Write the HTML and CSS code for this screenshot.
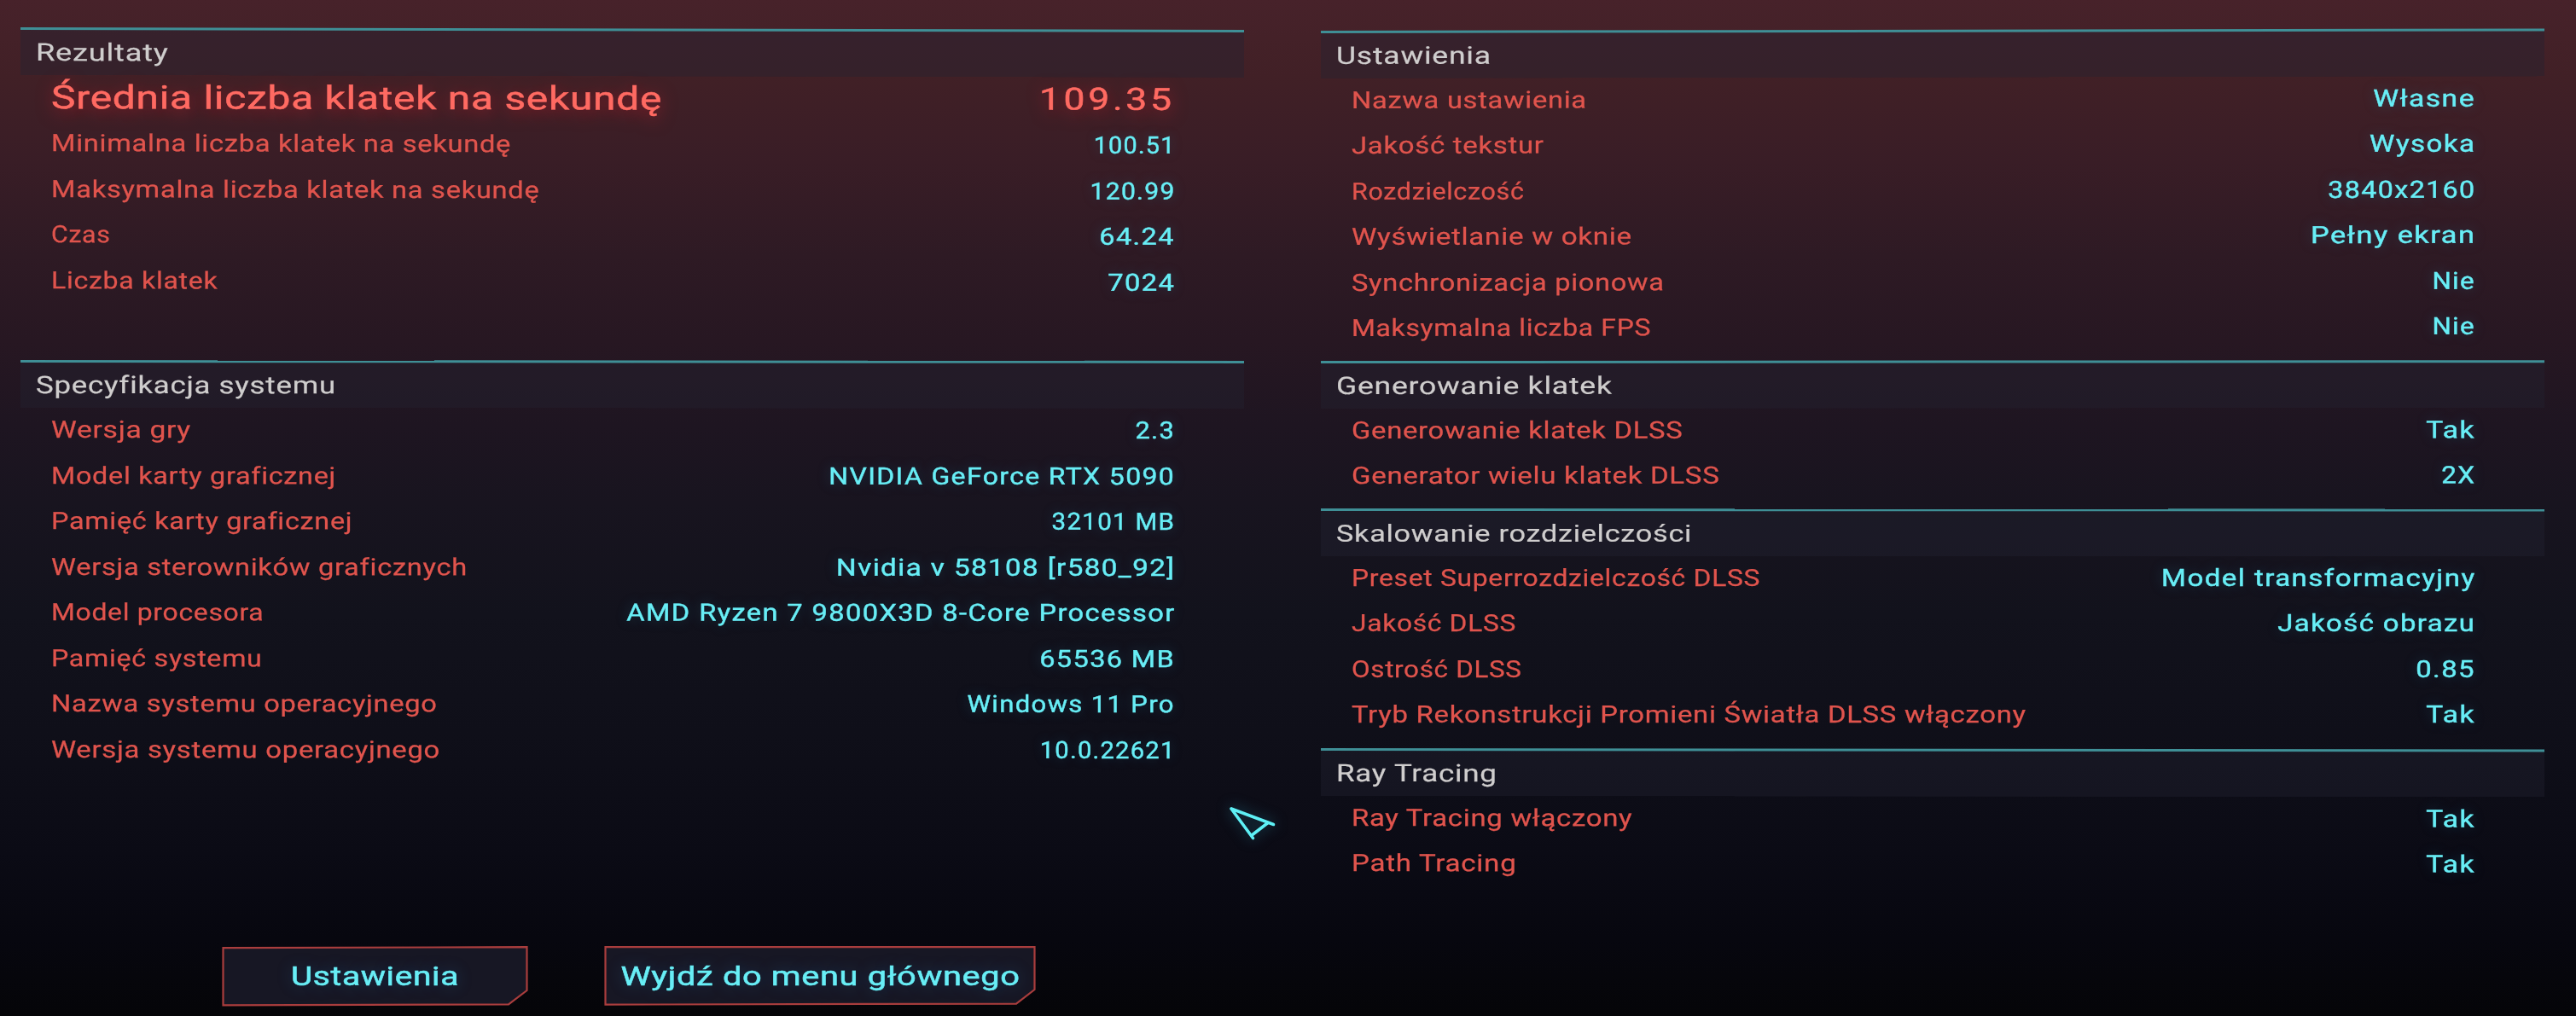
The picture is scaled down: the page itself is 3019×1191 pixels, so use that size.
FILE: index.html
```html
<!DOCTYPE html>
<html lang="pl">
<head>
    <meta charset="UTF-8">
    <meta name="viewport" content="width=device-width, initial-scale=1.0">
    <title>Rezultaty</title>
    <link rel="stylesheet" href="styles.css">
</head>
<body>
    <div class="columns">
        <div class="column column-left">
            <section class="section results">
                <h2><span data-width="153">Rezultaty</span></h2>
                <div class="row row-main"><span class="label" data-width="713">Średnia liczba klatek na sekundę</span><span class="value" data-width="153">109.35</span></div>
                <div class="row"><span class="label" data-width="536">Minimalna liczba klatek na sekundę</span><span class="value" data-width="93">100.51</span></div>
                <div class="row"><span class="label" data-width="570">Maksymalna liczba klatek na sekundę</span><span class="value" data-width="97">120.99</span></div>
                <div class="row"><span class="label" data-width="67">Czas</span><span class="value" data-width="85">64.24</span></div>
                <div class="row"><span class="label" data-width="192">Liczba klatek</span><span class="value" data-width="75">7024</span></div>
            </section>

            <section class="section system">
                <h2><span data-width="349">Specyfikacja systemu</span></h2>
                <div class="row"><span class="label" data-width="161">Wersja gry</span><span class="value" data-width="43">2.3</span></div>
                <div class="row"><span class="label" data-width="331">Model karty graficznej</span><span class="value" data-width="402">NVIDIA GeForce RTX 5090</span></div>
                <div class="row"><span class="label" data-width="350">Pamięć karty graficznej</span><span class="value" data-width="141">32101 MB</span></div>
                <div class="row"><span class="label" data-width="485">Wersja sterowników graficznych</span><span class="value" data-width="393">Nvidia v 58108 [r580_92]</span></div>
                <div class="row"><span class="label" data-width="246">Model procesora</span><span class="value" data-width="640">AMD Ryzen 7 9800X3D 8-Core Processor</span></div>
                <div class="row"><span class="label" data-width="245">Pamięć systemu</span><span class="value" data-width="155">65536 MB</span></div>
                <div class="row"><span class="label" data-width="450">Nazwa systemu operacyjnego</span><span class="value" data-width="240">Windows 11 Pro</span></div>
                <div class="row"><span class="label" data-width="453">Wersja systemu operacyjnego</span><span class="value" data-width="156">10.0.22621</span></div>
            </section>

            <div class="buttons">
                <button class="btn btn-settings">
                    <svg class="btn-frame" width="359" height="71" viewBox="0 0 359 71"><path d="M1.5 2.2 L357.5 1.2 V52 L336 68.4 L1.5 69.4 Z"/></svg>
                    <span data-width="194">Ustawienia</span>
                </button>
                <button class="btn btn-exit">
                    <svg class="btn-frame" width="506" height="71" viewBox="0 0 506 71"><path d="M1.5 1.2 H504.5 V51 L483 67.6 L1.5 68.6 Z"/></svg>
                    <span data-width="465">Wyjdź do menu głównego</span>
                </button>
            </div>
        </div>

        <div class="column column-right">
            <section class="section settings">
                <h2><span data-width="179">Ustawienia</span></h2>
                <div class="row"><span class="label" data-width="273">Nazwa ustawienia</span><span class="value" data-width="116">Własne</span></div>
                <div class="row"><span class="label" data-width="223">Jakość tekstur</span><span class="value" data-width="120">Wysoka</span></div>
                <div class="row"><span class="label" data-width="200">Rozdzielczość</span><span class="value" data-width="170">3840x2160</span></div>
                <div class="row"><span class="label" data-width="326">Wyświetlanie w oknie</span><span class="value" data-width="189">Pełny ekran</span></div>
                <div class="row"><span class="label" data-width="364">Synchronizacja pionowa</span><span class="value" data-width="47">Nie</span></div>
                <div class="row"><span class="label" data-width="348">Maksymalna liczba FPS</span><span class="value" data-width="47">Nie</span></div>
            </section>

            <section class="section frames">
                <h2><span data-width="320">Generowanie klatek</span></h2>
                <div class="row"><span class="label" data-width="385">Generowanie klatek DLSS</span><span class="value" data-width="54">Tak</span></div>
                <div class="row"><span class="label" data-width="428">Generator wielu klatek DLSS</span><span class="value" data-width="36">2X</span></div>
            </section>

            <section class="section scaling">
                <h2><span data-width="414">Skalowanie rozdzielczości</span></h2>
                <div class="row"><span class="label" data-width="476">Preset Superrozdzielczość DLSS</span><span class="value" data-width="364">Model transformacyjny</span></div>
                <div class="row"><span class="label" data-width="190">Jakość DLSS</span><span class="value" data-width="228">Jakość obrazu</span></div>
                <div class="row"><span class="label" data-width="197">Ostrość DLSS</span><span class="value" data-width="66">0.85</span></div>
                <div class="row"><span class="label" data-width="788">Tryb Rekonstrukcji Promieni Światła DLSS włączony</span><span class="value" data-width="54">Tak</span></div>
            </section>

            <section class="section raytracing">
                <h2><span data-width="186">Ray Tracing</span></h2>
                <div class="row"><span class="label" data-width="326">Ray Tracing włączony</span><span class="value" data-width="54">Tak</span></div>
                <div class="row"><span class="label" data-width="190">Path Tracing</span><span class="value" data-width="54">Tak</span></div>
            </section>
        </div>
    </div>

    <svg class="cursor" width="60" height="44" viewBox="0 0 60 44">
        <path d="M5 5 L54.5 23.5 M5 5 L30.5 39.5 M28.5 36.5 L48 21.5"/>
    </svg>

    <script>
        // Stretch each text to its wide HUD proportions
        document.querySelectorAll('[data-width]').forEach(el => {
            const spacing = parseFloat(getComputedStyle(el).letterSpacing) || 0;
            const natural = el.offsetWidth - spacing - 2;
            el.style.transform = `scaleX(${(el.dataset.width / natural).toFixed(4)})`;
        });
    </script>
</body>
</html>
```
FILE: styles.css
```css
* {
    box-sizing: border-box;
}
body {
    margin: 0;
    width: 3019px;
    height: 1191px;
    overflow: hidden;
    font-family: Roboto, sans-serif;
    background: linear-gradient(
        #47222a 0px,
        #412026 90px,
        #391d26 190px,
        #2e1a24 300px,
        #271722 400px,
        #1e1521 500px,
        #18141f 590px,
        #12121c 720px,
        #0f0f19 860px,
        #0b0b15 1000px,
        #07070f 1100px,
        #050508 1191px
    );
}
.columns {
    display: flex;
    gap: 90px;
    padding-left: 24px;
}
.column {
    display: flex;
    flex-direction: column;
    width: 1434px;
}
.column-left {
    padding-top: 32.2px;
    gap: 65.4px;
}
.column-right {
    padding-top: 35.7px;
    gap: 10.8px;
}

.section {
    transform-origin: 0 0;
}
.results {
    transform: skewY(0.12deg);
}
.system {
    transform: skewY(0.04deg);
}
.settings {
    transform: skewY(-0.1deg);
}
.frames {
    transform: skewY(-0.03deg);
}
.scaling {
    transform: skewY(0.02deg);
}
.raytracing {
    transform: skewY(0.06deg);
}

h2 {
    margin: 0;
    height: 56px;
    padding-left: 18px;
    border-top: 3px solid #3f8f96;
    background: rgba(36, 34, 50, 0.4);
    background-clip: padding-box;
    color: #cfcdcd;
    font-size: 28.5px;
    font-weight: 400;
    line-height: 53px;
    letter-spacing: 0.6px;
    -webkit-text-stroke: 0.2px;
}
h2 span,
.label {
    display: inline-block;
    transform-origin: 0 50%;
}
.row {
    display: flex;
    justify-content: space-between;
    height: 53.4px;
    padding: 0 82px 0 36px;
    font-size: 27.8px;
    line-height: 51px;
    white-space: nowrap;
    -webkit-text-stroke: 0.25px;
}
.column-left .row {
    height: 53.5px;
}
.label {
    color: #e0544d;
    letter-spacing: 0.6px;
}
.value {
    color: #68eef6;
    letter-spacing: 1.2px;
    margin-right: -1.2px;
    transform-origin: 100% 50%;
    text-shadow: 0 0 14px rgba(40, 130, 170, 0.35);
    -webkit-text-stroke: 0.4px;
}
.column-left .row-main {
    height: 54px;
}
.row-main .label,
.row-main .value {
    color: #ff6a62;
    text-shadow: 0 4px 18px rgba(210, 30, 45, 0.65);
    -webkit-text-stroke: 0.5px;
}
.row-main .label {
    font-size: 38px;
    line-height: 52px;
}
.row-main .value {
    font-size: 36px;
    line-height: 53.4px;
    letter-spacing: 3px;
    margin-right: -1px;
}

.buttons {
    display: flex;
    gap: 89px;
    margin: 138px 0 0 236px;
}
.btn {
    position: relative;
    height: 71px;
    padding: 0;
    border: none;
    background: none;
    color: #68eef6;
    font-family: inherit;
    font-size: 31px;
    font-weight: 400;
    line-height: 67px;
    letter-spacing: 0.5px;
    white-space: nowrap;
    text-shadow: 0 0 16px rgba(40, 110, 170, 0.45);
    -webkit-text-stroke: 0.5px;
    cursor: pointer;
}
.btn span {
    position: relative;
    display: inline-block;
}
.btn-settings {
    width: 359px;
}
.btn-exit {
    width: 506px;
}
.btn-frame {
    position: absolute;
    left: 0;
    top: 0;
    fill: #171724;
    stroke: #a93d3d;
    stroke-width: 2.2;
}

.cursor {
    position: absolute;
    left: 1438px;
    top: 943px;
    fill: none;
    stroke: #5ef0f5;
    stroke-width: 3.6;
    stroke-linecap: round;
    filter: drop-shadow(0 0 8px rgba(40, 150, 180, 0.5));
}
```
